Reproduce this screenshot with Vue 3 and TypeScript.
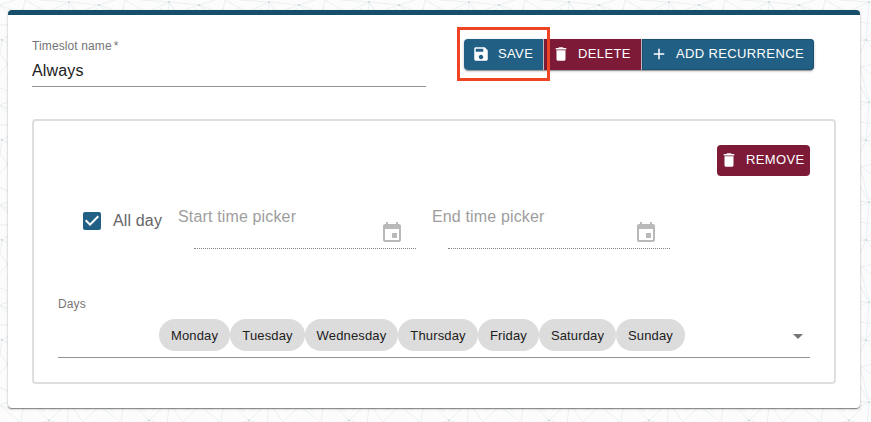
<script setup lang="ts">
import { ref } from 'vue'

interface Day {
  name: string
  width: number
}

const timeslotName = ref('Always')
const pickers: string[] = ['Start time picker', 'End time picker']
const days: Day[] = [
  { name: 'Monday', width: 71 },
  { name: 'Tuesday', width: 75 },
  { name: 'Wednesday', width: 93 },
  { name: 'Thursday', width: 80 },
  { name: 'Friday', width: 61 },
  { name: 'Saturday', width: 77 },
  { name: 'Sunday', width: 69 },
]
const trashPath = 'M6 19c0 1.1.9 2 2 2h8c1.1 0 2-.9 2-2V7H6v12zM19 4h-3.500l-1-1h-5l-1 1H5v2h14V4z'
</script>

<template>
  <div class="page">
    <svg class="mesh" width="871" height="422" aria-hidden="true">
      <defs>
        <pattern id="net" width="100" height="100" patternUnits="userSpaceOnUse">
          <g fill="none" stroke="#e6ecee" stroke-width="0.8">
            <path d="M-1 5L20 22M23 8L21 22M25 0L23 10M25 0L45 11M37 8L49 20.500L62 8M69 2L52 10M69 2L40 0M69 2L99 5L85 10M75 11L69 2M97 8L83 22L73 8M99 5L112 10M-1 5L13 10M99 5L115 0M-1 5L15 0" />
            <path d="M0 25H10M2 40L8 36M2 40L10 44M2 40L-4 38M0 54L10 67M0 73L10 62M0 88L10 92M2 40L0 54" />
            <path d="M66 40L60 36M66 40L60 53M66 40L72 31M60 40L72 41M66 40L69 2M66 40L72 47M60 22L73 24M60 67L73 64M60 66L73 75M60 67L69 102L60 110M69 102L73 94M60 86L69 102L73 106M49 20.500L40 23M49 20.500L60 23" />
          </g>
          <g fill="#c9d8df">
            <circle cx="69" cy="2" r="1.100" /><circle cx="99" cy="5" r="1.100" />
            <circle cx="2" cy="40" r="1.100" /><circle cx="66" cy="40" r="1.100" />
            <circle cx="49" cy="20.500" r="1.100" />
          </g>
        </pattern>
      </defs>
      <rect width="871" height="422" fill="url(#net)" />
    </svg>

    <main class="card">
      <header class="top">
        <label class="name-field">
          <span class="label">Timeslot name<span class="star">*</span></span>
          <input v-model="timeslotName" class="name-input" type="text" />
        </label>
        <div class="group">
          <button class="btn blue save">
            <svg class="icon" viewBox="0 0 24 24"><path fill-rule="evenodd" d="M17 3H5c-1.110 0-2 .9-2 2v14c0 1.100.89 2 2 2h14c1.100 0 2-.9 2-2V7l-4-4zm-5 16c-1.660 0-3-1.340-3-3s1.340-3 3-3 3 1.340 3 3-1.340 3-3 3zm3-10H5V5h10v4z" /></svg>
            <span>SAVE</span>
            <span class="highlight"></span>
          </button>
          <button class="btn red delete">
            <svg class="icon" viewBox="0 0 24 24"><path :d="trashPath" /></svg>
            <span>DELETE</span>
          </button>
          <button class="btn blue add">
            <svg class="icon" viewBox="0 0 24 24"><path d="M19 13h-6v6h-2v-6H5v-2h6V5h2v6h6v2z" /></svg>
            <span>ADD RECURRENCE</span>
          </button>
        </div>
      </header>

      <section class="recurrence">
        <button class="btn red remove">
          <svg class="icon" viewBox="0 0 24 24"><path :d="trashPath" /></svg>
          <span>REMOVE</span>
        </button>
        <div class="times">
          <div class="all-day">
            <svg class="check" viewBox="0 0 24 24"><path d="M19 3H5c-1.110 0-2 .9-2 2v14c0 1.100.89 2 2 2h14c1.110 0 2-.9 2-2V5c0-1.100-.89-2-2-2zm-9 14l-5-5 1.410-1.410L10 14.170l7.590-7.590L19 8l-9 9z" /></svg>
            <span>All day</span>
          </div>
          <div v-for="picker in pickers" :key="picker" class="picker">
            <span class="picker-label">{{ picker }}</span>
            <div class="picker-line">
              <svg viewBox="0 0 24 24"><path d="M17 12h-5v5h5v-5zM16 1v2H8V1H6v2H5c-1.110 0-1.990.9-1.990 2L3 19c0 1.100.89 2 2 2h14c1.100 0 2-.9 2-2V5c0-1.100-.9-2-2-2h-1V1h-2zm3 18H5V8h14v11z" /></svg>
            </div>
          </div>
        </div>
        <div class="days">
          <span class="label">Days</span>
          <div class="select">
            <div class="chips">
              <span v-for="day in days" :key="day.name" class="chip" :style="{ width: day.width + 'px' }">{{ day.name }}</span>
            </div>
            <svg class="arrow" viewBox="0 0 24 24"><path d="M7 10l5 5 5-5z" /></svg>
          </div>
        </div>
      </section>
    </main>
  </div>
</template>

<style>
body {
  margin: 0;
  overflow: hidden;
}
</style>

<style scoped>
* {
  box-sizing: border-box;
}
.page {
  position: relative;
  width: 871px;
  height: 422px;
  padding: 10px 11px 14px 8px;
  overflow: hidden;
  background: #fcfcfc;
  font-family: "Liberation Sans", Arial, sans-serif;
  color: #212121;
}
.mesh {
  position: absolute;
  inset: 0;
}
.card {
  position: relative;
  width: 852px;
  height: 398px;
  padding: 24px;
  border-top: 5px solid #174e6c;
  border-radius: 4px;
  background: #fff;
  box-shadow: 0 1px 1px rgba(0, 0, 0, 0.4), 0 1px 3px rgba(0, 0, 0, 0.18);
}
.top {
  display: flex;
  justify-content: space-between;
  height: 80px;
  padding-right: 22px;
}
.name-field {
  display: flex;
  flex-direction: column;
  width: 394px;
  height: 48px;
  border-bottom: 1px solid #929292;
}
.label {
  display: block;
  height: 14px;
  font-size: 12px;
  line-height: 14px;
  letter-spacing: 0.11px;
  color: #757575;
}
.star {
  margin-left: 2px;
}
.name-input {
  height: 33px;
  padding: 2px 0 0;
  border: 0;
  outline: 0;
  background: transparent;
  font: 16px "Liberation Sans", Arial, sans-serif;
  letter-spacing: 0.15px;
  color: #212121;
}
.group {
  display: flex;
  width: 350px;
  height: 31px;
  border-radius: 4px;
  box-shadow: 0 2px 1px -1px rgba(0, 0, 0, 0.3), 0 1px 3px rgba(0, 0, 0, 0.25);
}
.btn {
  position: relative;
  display: flex;
  align-items: center;
  height: 31px;
  padding: 0 0 2px;
  border: 0;
  font: 13px "Liberation Sans", Arial, sans-serif;
  letter-spacing: 0.37px;
  white-space: nowrap;
  color: #fff;
}
.btn > span:not(.highlight) {
  line-height: 15px;
  padding-bottom: 1px;
}
.icon {
  flex: none;
  width: 18px;
  height: 18px;
  fill: #fff;
}
.blue {
  background: #225f84;
}
.red {
  background: #7c1a38;
}
.save {
  width: 80px;
  padding-left: 8px;
  gap: 8px;
  border-right: 1px solid #bdbdbd;
  border-radius: 4px 0 0 4px;
}
.delete {
  width: 98px;
  padding-left: 8px;
  gap: 8px;
  border-right: 1px solid #bdbdbd;
}
.add {
  width: 172px;
  padding-left: 8px;
  gap: 8px;
  border-radius: 0 4px 4px 0;
  box-shadow: inset 0 0 0 1px #1b506f;
}
.highlight {
  position: absolute;
  z-index: 1;
  left: -7px;
  top: -12px;
  width: 93px;
  height: 54px;
  border: 3px solid #ef4423;
}
.recurrence {
  display: flex;
  flex-direction: column;
  width: 804px;
  height: 265px;
  padding: 24px;
  border: 2px solid #dedede;
  border-radius: 4px;
}
.remove {
  align-self: flex-end;
  width: 93px;
  padding-left: 3px;
  gap: 8px;
  border-radius: 4px;
}
.times {
  display: flex;
  height: 121px;
  padding: 31px 0 0 22px;
}
.all-day {
  display: flex;
  align-items: center;
  width: 98px;
  height: 28px;
  gap: 9px;
  font-size: 16px;
  letter-spacing: 0.15px;
  color: #666;
}
.check {
  width: 24px;
  height: 24px;
  fill: #225f84;
}
.picker {
  display: flex;
  flex-direction: column;
  width: 254px;
  color: #9e9e9e;
}
.picker-label {
  height: 18px;
  font-size: 16px;
  line-height: 20px;
  letter-spacing: 0.15px;
}
.picker-line {
  display: flex;
  justify-content: flex-end;
  width: 222px;
  height: 42px;
  margin: -18px 0 0 16px;
  border-bottom: 1px dotted #858585;
}
.picker-line svg {
  width: 24px;
  height: 24px;
  margin: 14px 12px 0 0;
  fill: #b9b9b9;
}
.days {
  display: flex;
  flex-direction: column;
}
.select {
  display: flex;
  justify-content: space-between;
  height: 47px;
  padding: 8px 0 0 101px;
  border-bottom: 1px solid #929292;
}
.chips {
  display: flex;
}
.chip {
  display: flex;
  align-items: center;
  justify-content: center;
  height: 32px;
  border-radius: 16px;
  background: #dcdcdc;
  font-size: 13px;
  letter-spacing: 0.15px;
}
.arrow {
  width: 24px;
  height: 24px;
  margin-top: 5px;
  fill: #757575;
}
</style>
